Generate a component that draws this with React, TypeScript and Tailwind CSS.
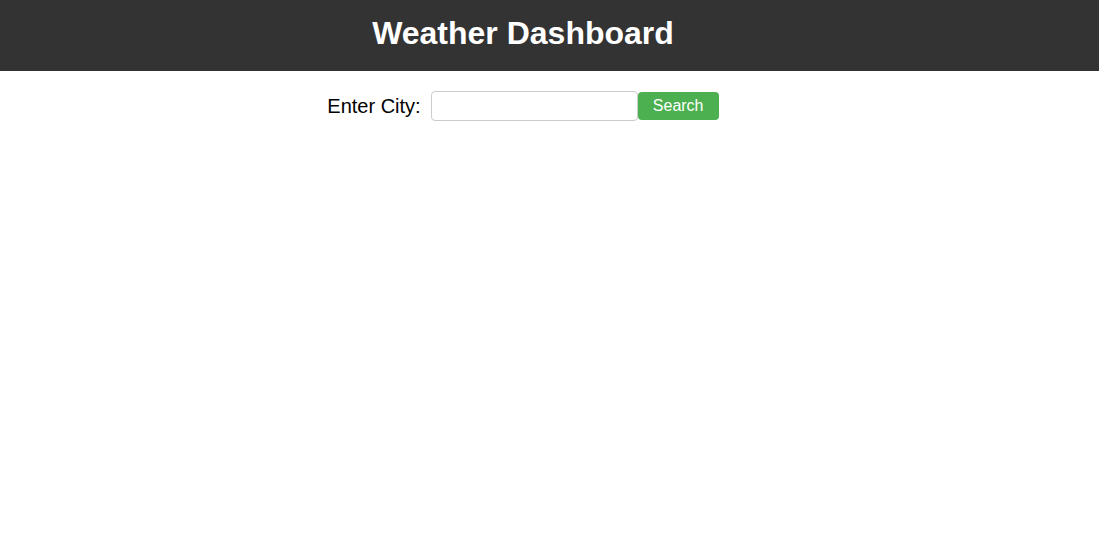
export default function App() {
  return (
    <div className="min-h-screen bg-white" style={{ fontFamily: '"Liberation Sans", Arial, sans-serif' }}>
      {/* Header */}
      <header className="h-[71px] bg-[#333333] flex items-center justify-center pr-[53px] pb-[6px]">
        <h1 className="text-[32px] font-bold text-white leading-none">Weather Dashboard</h1>
      </header>

      {/* Search form */}
      <div className="flex items-center justify-center pr-[53px] pt-[20px]">
        <label className="text-[20px] text-black mr-[10px]">Enter City:</label>
        <input
          type="text"
          className="w-[207px] h-[30px] border border-[#cccccc] rounded-[4px] px-2 text-base outline-none"
        />
        <button className="h-[28px] w-[81px] bg-[#4CAF50] text-white text-base rounded-[4px] leading-none">
          Search
        </button>
      </div>
    </div>
  )
}
